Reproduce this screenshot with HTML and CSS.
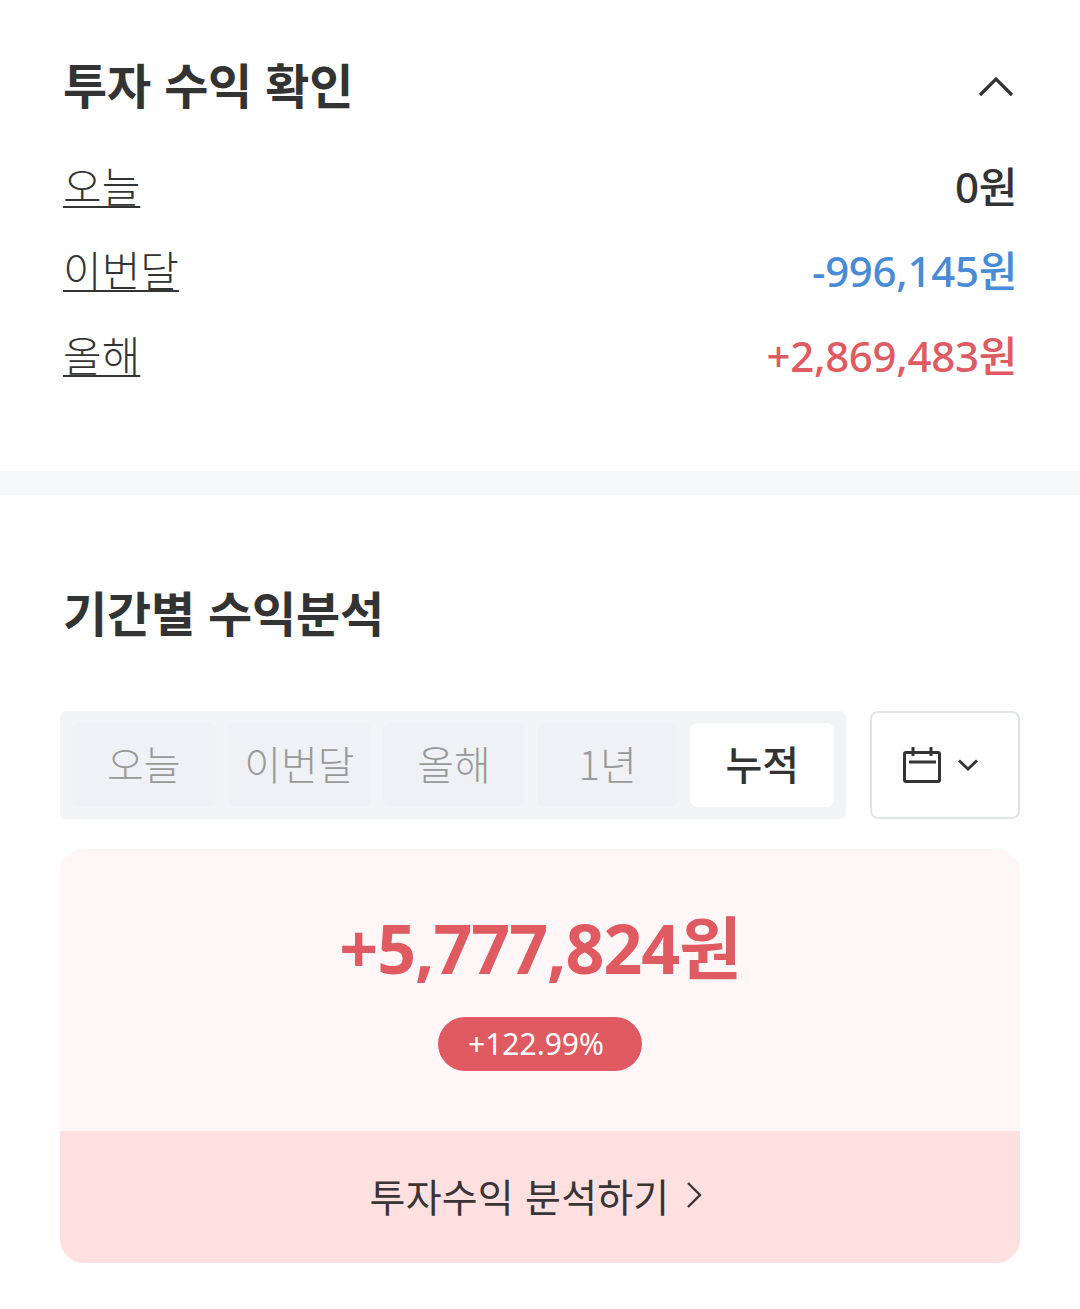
FILE: index.html
```html
<!DOCTYPE html>
<html lang="ko">
<head>
  <meta charset="UTF-8">
  <meta name="viewport" content="width=device-width, initial-scale=1.0">
  <title>투자 수익 확인</title>
  <link rel="stylesheet" href="styles.css">
</head>
<body>
  <section class="summary">
    <div class="summary-header">
      <h2 class="title">투자 수익 확인</h2>
      <svg class="collapse-icon" width="38" height="24" viewBox="0 0 38 24" fill="none" stroke="#333" stroke-width="3.2">
        <path d="M3 21L19 5L35 21"/>
      </svg>
    </div>
    <div class="row"><a class="row-label" href="#">오늘</a><span class="row-value">0원</span></div>
    <div class="row"><a class="row-label" href="#">이번달</a><span class="row-value minus">-996,145원</span></div>
    <div class="row"><a class="row-label" href="#">올해</a><span class="row-value plus">+2,869,483원</span></div>
  </section>

  <div class="divider"></div>

  <section class="analysis">
    <h2 class="title">기간별 수익분석</h2>

    <div class="filters">
      <div class="tabs">
        <button class="tab tab-today">오늘</button>
        <button class="tab tab-month">이번달</button>
        <button class="tab tab-year">올해</button>
        <button class="tab tab-1y">1년</button>
        <button class="tab tab-all active">누적</button>
      </div>
      <button class="date-button">
        <svg width="38" height="36" viewBox="0 0 38 36" fill="none" stroke="#333" stroke-width="3">
          <rect x="1.5" y="5.5" width="35" height="29" rx="1.5"/>
          <path d="M6 15H33" />
          <path d="M10 0V9M28 0V9"/>
        </svg>
        <svg width="20" height="12" viewBox="0 0 20 12" fill="none" stroke="#333" stroke-width="2.8">
          <path d="M1 1.5L10 10L19 1.5"/>
        </svg>
      </button>
    </div>

    <div class="result-card">
      <div class="result-body">
        <div class="result-amount">+5,777,824원</div>
        <div class="result-rate">+122.99%</div>
      </div>
      <a class="result-link" href="#">
        <span>투자수익 분석하기</span>
        <svg width="16" height="28" viewBox="0 0 16 28" fill="none" stroke="#3a3434" stroke-width="2.4">
          <path d="M2 2L14 14L2 26"/>
        </svg>
      </a>
    </div>
  </section>
</body>
</html>
```

FILE: styles.css
```css
* {
  box-sizing: border-box;
}

body {
  margin: 0;
  background-color: #fff;
  color: #333;
  font-family: "Noto Sans", "Noto Sans CJK KR", sans-serif;
}

.title {
  margin: 0;
  font-family: "Noto Sans CJK KR", sans-serif;
  font-size: 48px;
  font-weight: 700;
  line-height: 64px;
  letter-spacing: -0.2px;
  color: #333;
}

/* top summary */
.summary {
  height: 471px;
  padding: 51px 63px 0;
}

.summary-header {
  display: flex;
  justify-content: space-between;
  align-items: center;
  margin-bottom: 27px;
}

.collapse-icon {
  margin-top: 6px;
  margin-right: 2px;
}

.row {
  display: flex;
  justify-content: space-between;
  align-items: center;
  height: 84.5px;
  font-size: 42px;
}

.row-label {
  color: #333;
  font-family: "Noto Sans CJK KR", sans-serif;
  text-decoration: underline;
  text-decoration-thickness: 2px;
  text-underline-offset: 3px;
  font-weight: 300;
}

.row-value {
  font-weight: 500;
  letter-spacing: -0.3px;
}

.minus {
  color: #4a8bd6;
}

.plus {
  color: #df5b62;
}

.divider {
  height: 24px;
  background-color: #f7f8f9;
}

/* period analysis */
.analysis {
  padding: 84px 60px 0;
}

.analysis .title {
  padding-left: 3px;
  margin-bottom: 68px;
}

.filters {
  display: flex;
  justify-content: space-between;
  margin-bottom: 30px;
}

.tabs {
  display: flex;
  gap: 12px;
  width: 786px;
  height: 108px;
  padding: 12px;
  background-color: #f3f4f6;
  border-radius: 6px;
}

.tab {
  height: 84px;
  padding: 0 0 5px;
  border: none;
  border-radius: 8px;
  background-color: #eff1f4;
  color: #999;
  font-family: "Noto Sans CJK KR", sans-serif;
  font-size: 40px;
  font-weight: 300;
}

.tab-today,
.tab-month,
.tab-all {
  width: 144px;
}

.tab-year,
.tab-1y {
  width: 142px;
}

.tab.active {
  background-color: #fff;
  color: #333;
  font-weight: 500;
}

.date-button {
  display: flex;
  justify-content: center;
  align-items: center;
  gap: 17px;
  width: 150px;
  height: 108px;
  padding: 0 9px 0 0;
  background-color: #fff;
  border: 2px solid #e2e5e7;
  border-radius: 8px;
}

.result-card {
  height: 414px;
  border-radius: 24px;
  overflow: hidden;
  background-color: #fff7f7;
}

.result-body {
  display: flex;
  flex-direction: column;
  align-items: center;
  height: 282px;
  padding-top: 49px;
}

.result-amount {
  font-size: 68px;
  font-weight: 700;
  line-height: 100px;
  letter-spacing: -1px;
  color: #e05a62;
}

.result-rate {
  width: 204px;
  height: 54px;
  margin-top: 19px;
  padding-right: 8px;
  border-radius: 27px;
  background-color: #e05a62;
  color: #fff;
  font-size: 30px;
  line-height: 54px;
  text-align: center;
}

.result-link {
  display: flex;
  justify-content: center;
  align-items: center;
  gap: 17px;
  height: 132px;
  padding: 0 8px 4px 0;
  background-color: #ffe0e1;
  color: #3a3434;
  font-family: "Noto Sans CJK KR", sans-serif;
  font-size: 39px;
  font-weight: 400;
  letter-spacing: 0.2px;
  text-decoration: none;
}
```
